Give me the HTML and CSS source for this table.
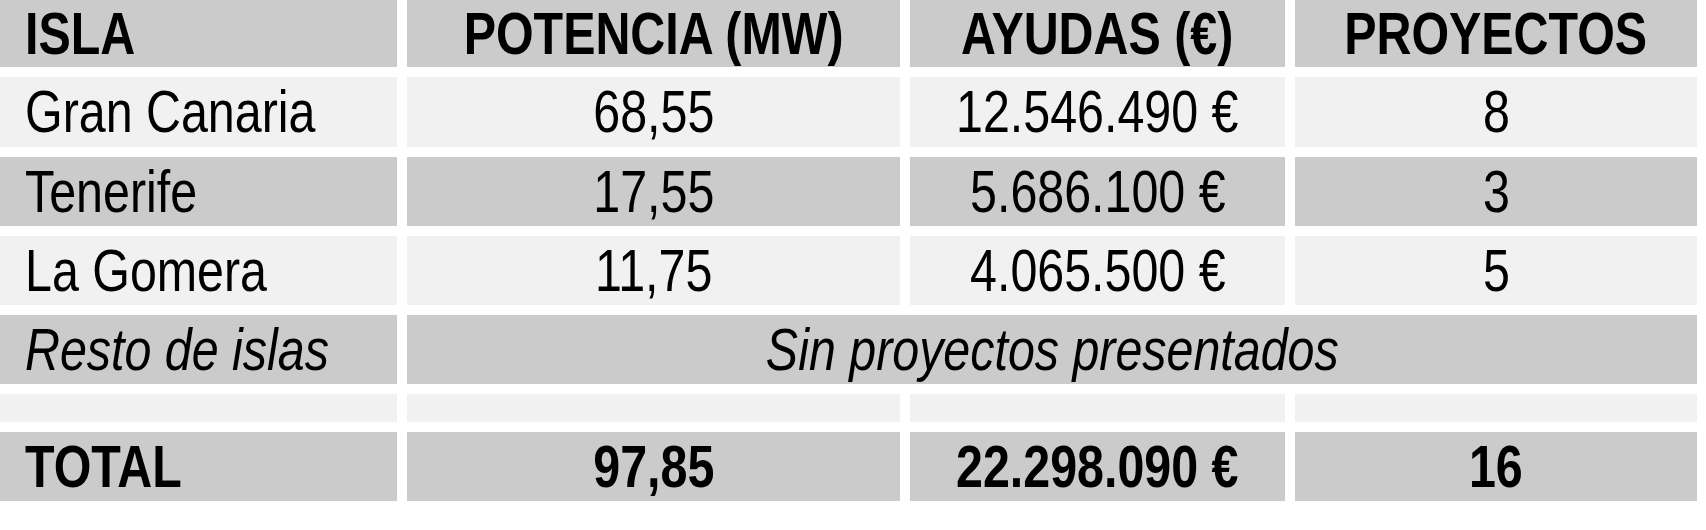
FILE: index.html
```html
<!DOCTYPE html>
<html lang="es">
  <head>
    <meta charset="UTF-8" />
    <meta name="viewport" content="width=device-width, initial-scale=1.0" />
    <title>Ayudas por isla</title>
    <link rel="stylesheet" href="styles.css">
  </head>
  <body>
    <div class="table">
      <div class="cell dark bold first"><span class="txt">ISLA</span></div>
      <div class="cell dark bold"><span class="txt">POTENCIA (MW)</span></div>
      <div class="cell dark bold"><span class="txt">AYUDAS (€)</span></div>
      <div class="cell dark bold"><span class="txt">PROYECTOS</span></div>

      <div class="cell light first"><span class="txt">Gran Canaria</span></div>
      <div class="cell light"><span class="txt">68,55</span></div>
      <div class="cell light"><span class="txt">12.546.490 €</span></div>
      <div class="cell light"><span class="txt">8</span></div>

      <div class="cell dark first"><span class="txt">Tenerife</span></div>
      <div class="cell dark"><span class="txt">17,55</span></div>
      <div class="cell dark"><span class="txt">5.686.100 €</span></div>
      <div class="cell dark"><span class="txt">3</span></div>

      <div class="cell light first"><span class="txt">La Gomera</span></div>
      <div class="cell light"><span class="txt">11,75</span></div>
      <div class="cell light"><span class="txt">4.065.500 €</span></div>
      <div class="cell light"><span class="txt">5</span></div>

      <div class="cell dark italic first"><span class="txt">Resto de islas</span></div>
      <div class="cell dark italic span-3"><span class="txt">Sin proyectos presentados</span></div>

      <div class="cell light"></div>
      <div class="cell light"></div>
      <div class="cell light"></div>
      <div class="cell light"></div>

      <div class="cell dark bold first"><span class="txt">TOTAL</span></div>
      <div class="cell dark bold"><span class="txt">97,85</span></div>
      <div class="cell dark bold"><span class="txt">22.298.090 €</span></div>
      <div class="cell dark bold"><span class="txt">16</span></div>
    </div>
  </body>
</html>
```

FILE: styles.css
```css
body {
  margin: 0;
  background-color: #fff;
  font-family: "Liberation Sans", Arial, sans-serif;
  color: #000;
}

.table {
  display: grid;
  grid-template-columns: 397px 493px 375px 402px;
  grid-template-rows: 67px 70px 69px 69px 69px 28px 69px;
  gap: 10px;
}

.cell {
  display: flex;
  justify-content: center;
  align-items: center;
  font-size: 59px;
  white-space: nowrap;
  overflow: hidden;
}

/* no narrow font installed, so squeeze the regular one */
.txt {
  display: inline-block;
  transform: scaleX(0.82);
}

.cell.first {
  justify-content: flex-start;
  padding-left: 25px;
}

.cell.first .txt {
  transform-origin: left center;
}

.dark {
  background-color: #cbcbcb;
}

.light {
  background-color: #f1f1f1;
}

.bold {
  font-weight: bold;
}

.italic {
  font-style: italic;
}

.span-3 {
  grid-column: span 3;
}
```
